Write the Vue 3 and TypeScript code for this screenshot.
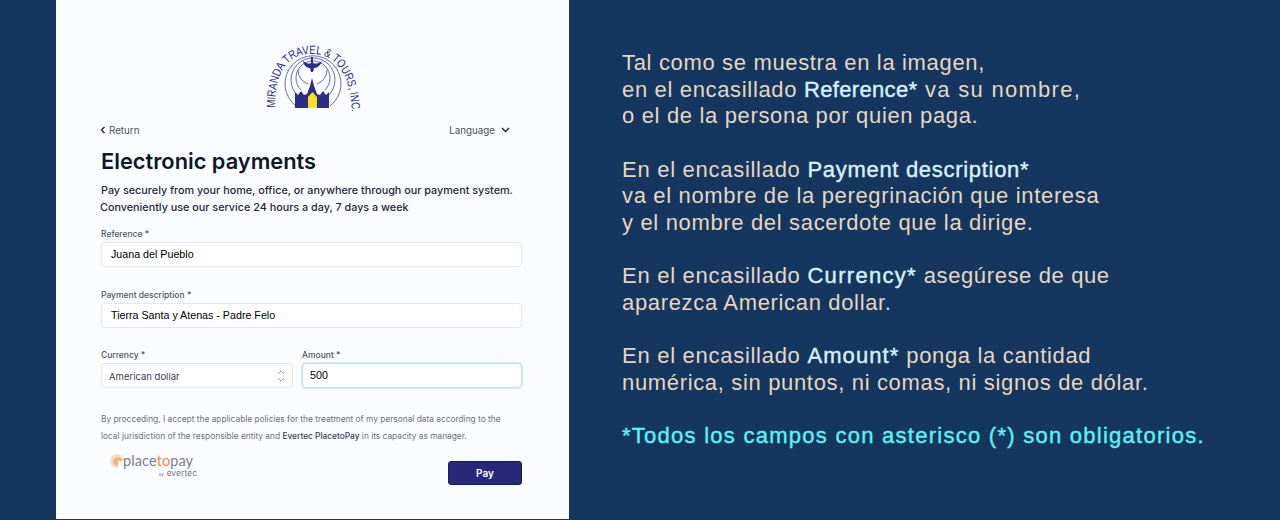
<template>
  <div class="page">
    <section class="card">
      <div class="logo">
        <svg width="110" height="75" viewBox="0 0 110 75">
          <defs>
            <path id="logo-arc" d="M15 68 C15 31 28 14 52 14 C76 14 92 34 92 80" />
          </defs>
          <g fill="none" stroke="#2b2e86" stroke-width="0.7">
            <path d="M36 66A28 28 0 1 1 70 66" />
            <path d="M38 56A22 22 0 1 1 68 56" />
            <path d="M41 50A17 17 0 1 1 65 50" />
            <path d="M38 30A15 15 0 0 0 48 44M67 30A15 15 0 0 1 57 44" />
          </g>
          <path d="M35 68V52l3 3 3-4 3 4 3-1 3-8 2-8 2 8 3 8 3 1 3-4 3 4 3-3v16z" fill="#2b2e86" />
          <path d="M48 68V57l4.5-5 4.5 5v11z" fill="#f3e31c" />
          <path d="M43 21C47 24 50 24 51 23V17h2V23C55 24 58 24 62 21 60 27 56 28 54 28L53 32H51L50 28C48 28 44 27 43 21z" fill="#2b2e86" />
          <text class="logo-text"><textPath href="#logo-arc" textLength="153" lengthAdjust="spacingAndGlyphs">MIRANDA TRAVEL &amp; TOURS, INC.</textPath></text>
        </svg>
      </div>

      <div class="nav-row">
        <div class="back">
          <svg width="6" height="8" viewBox="0 0 6 8"><path d="M4.5 1L1.5 4l3 3" fill="none" stroke="#1f2937" stroke-width="1.4" /></svg>
          <span>Return</span>
        </div>
        <div class="lang">
          <span>Language</span>
          <svg width="9" height="6" viewBox="0 0 9 6"><path d="M1 1l3.5 3.5L8 1" fill="none" stroke="#1f2937" stroke-width="1.4" /></svg>
        </div>
      </div>

      <h1>Electronic payments</h1>
      <p class="intro">Pay securely from your home, office, or anywhere through our payment system.</p>
      <p class="intro second">Conveniently use our service 24 hours a day, 7 days a week</p>

      <div class="field">
        <label>Reference *</label>
        <div class="input">Juana del Pueblo</div>
      </div>
      <div class="field desc">
        <label>Payment description *</label>
        <div class="input">Tierra Santa y Atenas - Padre Felo</div>
      </div>
      <div class="two-col">
        <div class="field">
          <label>Currency *</label>
          <div class="input select">
            <span>American dollar</span>
            <svg width="8" height="14" viewBox="0 0 8 14"><path d="M1 5l3-3 3 3M1 9l3 3 3-3" fill="none" stroke="#9ca3af" stroke-width="1" /></svg>
          </div>
        </div>
        <div class="field">
          <label>Amount *</label>
          <div class="input focus">500</div>
        </div>
      </div>

      <p class="policy">By procceding, I accept the applicable policies for the treatment of my personal data according to the<br />local jurisdiction of the responsible entity and <b>Evertec PlacetoPay</b> in its capacity as manager.</p>

      <div class="footer-row">
        <div class="p2p">
          <svg width="15" height="15" viewBox="0 0 15 15">
            <circle cx="8" cy="8" r="7" fill="#fbdcc0" />
            <circle cx="8.5" cy="8.5" r="4.5" fill="#f6b47f" />
            <path d="M9 8h6v7H9z" fill="#fbfcff" />
          </svg>
          <div class="p2p-text">
            <div class="p2p-name">place<span>to</span>pay</div>
            <div class="p2p-by"><small>by</small> evertec</div>
          </div>
        </div>
        <button class="pay">Pay</button>
      </div>
    </section>

    <section class="help">
      <p v-for="(block, i) in blocks" :key="i">
        <template v-for="(line, j) in block" :key="j">
          <span
            v-for="(part, k) in line"
            :key="k"
            :class="{ strong: part.bold }"
            :style="part.spacing ? { letterSpacing: part.spacing + 'px' } : undefined"
          >{{ part.text }}</span>
          <br v-if="j < block.length - 1" />
        </template>
      </p>
      <p class="note">*Todos los campos con asterisco (*) son obligatorios.</p>
    </section>
  </div>
</template>

<script setup lang="ts">
interface Part {
  text: string;
  bold?: boolean;
  spacing?: number;
}

const blocks: Part[][][] = [
  [
    [{ text: 'Tal como se muestra en la imagen,' }],
    [
      { text: 'en el encasillado ' },
      { text: 'Reference*', bold: true, spacing: 0.35 },
      { text: ' va su nombre,', spacing: 1.3 },
    ],
    [{ text: 'o el de la persona por quien paga.' }],
  ],
  [
    [{ text: 'En el encasillado ', spacing: 0.72 }, { text: 'Payment description*', bold: true, spacing: 0.7 }],
    [{ text: 'va el nombre de la peregrinación que interesa' }],
    [{ text: 'y el nombre del sacerdote que la dirige.' }],
  ],
  [
    [
      { text: 'En el encasillado ', spacing: 0.72 },
      { text: 'Currency*', bold: true, spacing: 1.3 },
      { text: ' asegúrese de que', spacing: 0.62 },
    ],
    [{ text: 'aparezca American dollar.' }],
  ],
  [
    [
      { text: 'En el encasillado ', spacing: 0.72 },
      { text: 'Amount*', bold: true, spacing: 1.1 },
      { text: ' ponga la cantidad' },
    ],
    [{ text: 'numérica, sin puntos, ni comas, ni signos de dólar.' }],
  ],
];
</script>

<style>
html, body {
  margin: 0;
  background: #15375f;
}
</style>

<style scoped>
.page {
  width: 1280px;
  height: 520px;
  display: flex;
  background: #15375f;
  overflow: hidden;
}

.card {
  width: 513px;
  height: 519px;
  margin-left: 56px;
  box-sizing: border-box;
  padding: 40px 47px 0 44px;
  background: #fbfcff;
  font-family: Inter, "Liberation Sans", sans-serif;
  color: #111827;
}

.logo {
  height: 75px;
  padding-left: 160px;
  display: flex;
}

.logo-text {
  font-family: "Liberation Sans", sans-serif;
  font-size: 12px;
  fill: #2b2e86;
}

.nav-row {
  display: flex;
  justify-content: space-between;
  align-items: center;
  margin-top: 8px;
  height: 14px;
  font-size: 9.8px;
  color: #4a4f5a;
}

.back {
  display: flex;
  align-items: center;
  gap: 3px;
}

.lang {
  display: flex;
  align-items: center;
  gap: 6px;
  margin-right: 12px;
}

h1 {
  margin: 11px 0 0 1px;
  font-size: 21.8px;
  line-height: 26px;
  font-weight: 600;
  color: #0f172a;
}

.intro {
  margin: 8px 0 0 1px;
  font-size: 10.8px;
  line-height: 17px;
  font-weight: 500;
  color: #1f2937;
}

.intro.second {
  margin: 0;
}

.field {
  flex: 1;
  margin-top: 12px;
  min-width: 0;
}

.field.desc {
  margin-top: 22px;
}

label {
  display: block;
  margin-left: 1px;
  font-size: 8.5px;
  line-height: 12px;
  font-weight: 500;
  color: #4b5563;
}

.input {
  height: 25px;
  margin: 2px 0 0 1px;
  box-sizing: border-box;
  padding: 0 9px 1px;
  display: flex;
  align-items: center;
  justify-content: space-between;
  background: #fff;
  border: 1px solid #e5e7eb;
  border-radius: 4px;
  font-family: "Liberation Sans", sans-serif;
  font-size: 10.7px;
  color: #000;
}

.select {
  font-family: Inter, sans-serif;
  font-size: 9.5px;
  color: #374151;
  padding: 1px 7px 0;
}

.focus {
  border-color: #bfdbfe;
  box-shadow: 0 0 0 1px #dbeafe;
  padding: 0 7px 1px;
}

.two-col {
  display: flex;
  gap: 8px;
  margin-top: 7px;
}

.two-col .field {
  margin-top: 14px;
}

.two-col .field:first-child {
  flex: 0 0 193px;
}

.policy {
  margin: 23px 0 0 1px;
  font-size: 8.35px;
  line-height: 17px;
  color: #6b7280;
}

.policy b {
  font-weight: 500;
  color: #374151;
}

.footer-row {
  display: flex;
  justify-content: space-between;
  align-items: flex-start;
  margin-top: 3px;
}

.p2p {
  display: flex;
  margin-left: 9px;
  margin-top: 5px;
}

.p2p-text {
  margin-left: -1px;
}

.p2p-name {
  font-family: Lato, sans-serif;
  font-size: 14.5px;
  line-height: 16px;
  letter-spacing: 0.1px;
  color: #7b8088;
}

.p2p-name span {
  color: #f08a3c;
}

.p2p-by {
  font-size: 8px;
  line-height: 9px;
  letter-spacing: 0.3px;
  margin-right: -4px;
  color: #6b7078;
  text-align: right;
}

.p2p-by small {
  font-size: 4px;
}

.pay {
  width: 74px;
  height: 24px;
  margin-top: 13px;
  padding: 0;
  background: #27287a;
  border: 1px solid #1b1c5e;
  border-radius: 3px;
  color: #fff;
  font-family: Inter, sans-serif;
  font-size: 10px;
  font-weight: 600;
}

.help {
  margin-left: 53px;
  padding-top: 50px;
  font-family: "Liberation Sans", sans-serif;
  font-size: 22px;
  line-height: 26.67px;
  letter-spacing: 0.66px;
  color: #e6d6bf;
  white-space: nowrap;
}

.help p {
  margin: 0 0 26.67px;
}

.help .strong {
  -webkit-text-stroke: 0.4px #d9f1fb;
  color: #d9f1fb;
}

.help .note {
  letter-spacing: 1.26px;
  color: #5cf2f2;
  -webkit-text-stroke: 0.4px #5cf2f2;
}
</style>
